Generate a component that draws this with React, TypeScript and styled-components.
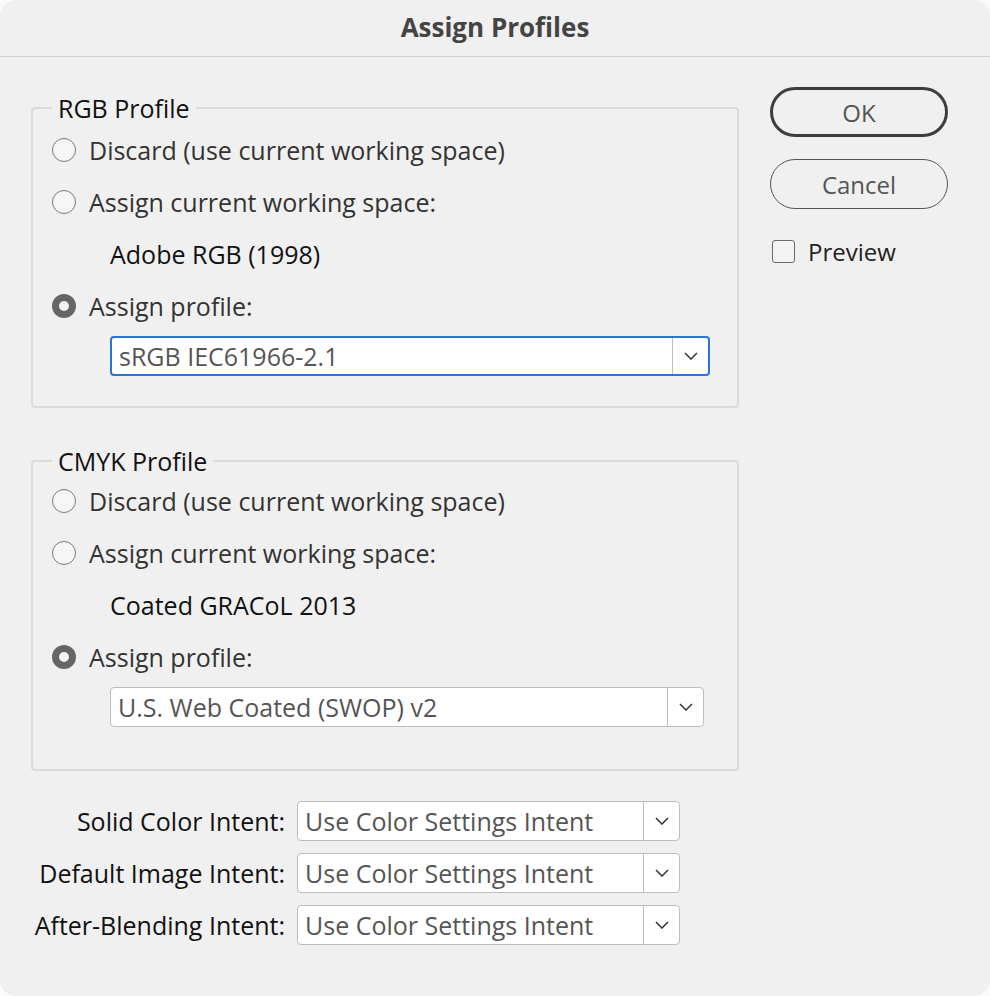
import React from "react";
import styled, { createGlobalStyle, css } from "styled-components";

const Global = createGlobalStyle`
  html, body { margin: 0; padding: 0; background: #fbfbfb; }
  body { font-family: "Open Sans", "Noto Sans", sans-serif; }
  * { box-sizing: border-box; }
`;

const Dialog = styled.div`
  width: 990px;
  height: 996px;
  background: #f0f0f0;
  border-radius: 16px;
  display: flex;
  flex-direction: column;
  overflow: hidden;
`;

const TitleBar = styled.div`
  height: 57px;
  flex: none;
  display: flex;
  align-items: center;
  justify-content: center;
  border-bottom: 1.5px solid #d3d3d3;
  font-weight: 700;
  font-size: 26px;
  color: #444;
  padding-bottom: 3px;
`;

const Body = styled.div`
  display: grid;
  grid-template-columns: 708px 178px;
  column-gap: 31px;
  padding-left: 31px;
`;

const Main = styled.div`
  padding-top: 37px;
  display: flex;
  flex-direction: column;
`;

const Side = styled.div`
  padding-top: 30px;
  display: flex;
  flex-direction: column;
`;

const Group = styled.fieldset<{ $gapTop?: number; $padTop: number; $padBottom: number }>`
  margin: ${(p) => p.$gapTop ?? 0}px 0 0 0;
  border: 2px solid #dadada;
  border-radius: 4px;
  padding: ${(p) => p.$padTop}px 19px ${(p) => p.$padBottom}px 19px;
  min-width: 0;
`;

const Legend = styled.legend`
  padding: 0 6px;
  font-size: 25px;
  line-height: 28px;
  color: #111;
`;

const Row = styled.label`
  display: flex;
  align-items: center;
  height: 52px;
  gap: 13px;
  font-size: 25px;
  color: #333;
`;

const Radio = styled.span<{ $on?: boolean }>`
  width: 24px;
  height: 24px;
  flex: none;
  border-radius: 50%;
  ${(p) =>
    p.$on
      ? css`
          background: #f3f3f3;
          border: 7.5px solid #666;
        `
      : css`
          background: #f6f6f6;
          border: 1.5px solid #7a7a7a;
        `}
`;

const Value = styled.div`
  height: 52px;
  display: flex;
  align-items: center;
  padding-left: 58px;
  font-size: 25px;
  color: #111;
`;

const Select = styled.div<{ $focus?: boolean; $w: number }>`
  width: ${(p) => p.$w}px;
  height: 40px;
  display: flex;
  align-items: stretch;
  background: #fff;
  border-radius: 4px;
  border: ${(p) => (p.$focus ? "2px solid #2d73d2" : "1.5px solid #bdbdbd")};
  flex: none;
`;

const SelectText = styled.div`
  flex: 1;
  display: flex;
  align-items: center;
  padding-left: 7px;
  font-size: 25px;
  color: #555;
  white-space: nowrap;
  overflow: hidden;
`;

const Chevron = styled.div`
  width: 36px;
  flex: none;
  display: flex;
  align-items: center;
  justify-content: center;
  border-left: 1.5px solid #bdbdbd;
`;

const SelectWrap = styled.div`
  padding-left: 58px;
  margin-top: 4px;
`;

const Intents = styled.div`
  margin-top: 30px;
  display: grid;
  grid-template-columns: 254px auto;
  column-gap: 12px;
  row-gap: 12px;
  align-items: center;
  margin-left: -31px;
  padding-left: 31px;
`;

const IntentLabel = styled.div`
  text-align: right;
  font-size: 25px;
  color: #111;
  white-space: nowrap;
`;

const Button = styled.button<{ $primary?: boolean }>`
  width: 178px;
  height: 50px;
  border-radius: 25px;
  background: transparent;
  font-family: inherit;
  font-size: 24px;
  color: #555;
  border: ${(p) => (p.$primary ? "3px solid #3d3d3d" : "1.5px solid #555")};
  padding: 0;
`;

const ButtonStack = styled.div`
  display: flex;
  flex-direction: column;
  gap: 22px;
`;

const CheckRow = styled.label`
  margin-top: 26px;
  display: flex;
  align-items: center;
  gap: 13px;
  padding-left: 2px;
  font-size: 24px;
  color: #222;
`;

const Box = styled.span`
  width: 23px;
  height: 23px;
  border: 1.5px solid #6a6a6a;
  border-radius: 3px;
  background: #f4f4f4;
`;

const ChevronIcon = () => (
  <svg width="14" height="8" viewBox="0 0 14 8">
    <path d="M1 1 L7 7 L13 1" fill="none" stroke="#3a3a3a" strokeWidth="1.6" />
  </svg>
);

const Dropdown = ({ text, focus, w }: { text: string; focus?: boolean; w: number }) => (
  <Select $focus={focus} $w={w}>
    <SelectText>{text}</SelectText>
    <Chevron>
      <ChevronIcon />
    </Chevron>
  </Select>
);

const ProfileGroup = ({
  title,
  current,
  profile,
  focus,
  w,
  gapTop,
  padTop,
  padBottom,
}: {
  title: string;
  current: string;
  profile: string;
  focus?: boolean;
  w: number;
  gapTop?: number;
  padTop: number;
  padBottom: number;
}) => (
  <Group $gapTop={gapTop} $padTop={padTop} $padBottom={padBottom}>
    <Legend>{title}</Legend>
    <Row>
      <Radio />
      Discard (use current working space)
    </Row>
    <Row>
      <Radio />
      Assign current working space:
    </Row>
    <Value>{current}</Value>
    <Row>
      <Radio $on />
      Assign profile:
    </Row>
    <SelectWrap>
      <Dropdown text={profile} focus={focus} w={w} />
    </SelectWrap>
  </Group>
);

export default function App() {
  return (
    <>
      <Global />
      <Dialog>
        <TitleBar>Assign Profiles</TitleBar>
        <Body>
          <Main>
            <ProfileGroup
              title="RGB Profile"
              current="Adobe RGB (1998)"
              profile="sRGB IEC61966-2.1"
              focus
              w={600}
              padTop={2}
              padBottom={30}
            />
            <ProfileGroup
              title="CMYK Profile"
              current="Coated GRACoL 2013"
              profile="U.S. Web Coated (SWOP) v2"
              w={594}
              gapTop={39}
              padTop={0}
              padBottom={42}
            />
            <Intents>
              <IntentLabel>Solid Color Intent:</IntentLabel>
              <Dropdown text="Use Color Settings Intent" w={383} />
              <IntentLabel>Default Image Intent:</IntentLabel>
              <Dropdown text="Use Color Settings Intent" w={383} />
              <IntentLabel>After-Blending Intent:</IntentLabel>
              <Dropdown text="Use Color Settings Intent" w={383} />
            </Intents>
          </Main>
          <Side>
            <ButtonStack>
              <Button $primary>OK</Button>
              <Button>Cancel</Button>
            </ButtonStack>
            <CheckRow>
              <Box />
              Preview
            </CheckRow>
          </Side>
        </Body>
      </Dialog>
    </>
  );
}
